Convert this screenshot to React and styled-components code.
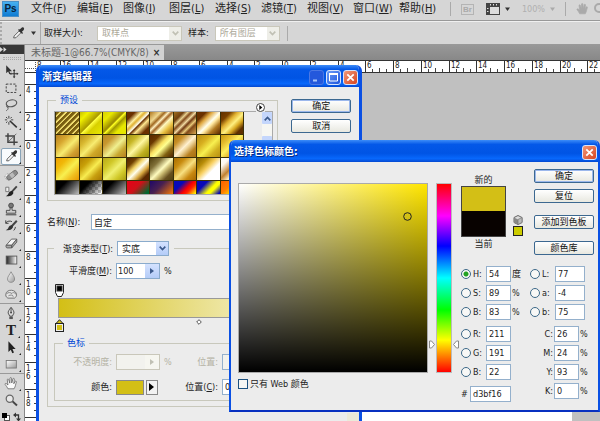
import React, { useState } from "react";
import styled, { createGlobalStyle, css } from "styled-components";

const MENUS = [
    ["文件", "F"], ["编辑", "E"], ["图像", "I"], ["图层", "L"], ["选择", "S"],
    ["滤镜", "T"], ["视图", "V"], ["窗口", "W"], ["帮助", "H"],
];

const diag = (...stops) => `linear-gradient(135deg, ${stops.join(", ")})`;

const PRESETS = [
    "repeating-linear-gradient(135deg, #7a5e10 0 2px, #f0dc70 3px 4px)",
    diag("#c8c000", "#f0f000 20%", "#a89800 49%", "#ffff40 52%", "#d8d000 66%", "#e8e800"),
    diag("#d8d000", "#e8e800 22%", "#988800 46%", "#ffff20 51%", "#a09800 60%", "#e8e800 75%"),
    diag("#6a3000", "#6a3000 18%", "#fff0a0 34%", "#e0b030 42%", "#fffff0 52%", "#6a3000 56%", "#ffe890 66%", "#6a3000 84%"),
    diag("#b07820", "#f0d890 24%", "#a06820 34%", "#fff0c0 42%", "#a06020 50%", "#fff8c0 60%", "#e8c040 76%", "#905008"),
    diag("#a07020", "#704010 22%", "#e8d090 32%", "#804818 40%", "#f0d8a0 50%", "#703810 58%", "#e8c878 68%", "#804818 76%", "#d8a850"),
    diag("#6a3000", "#6a3000 20%", "#e0a840 34%", "#fffff0 52%", "#ffe8a0 60%", "#b07820 76%", "#5a2800"),
    diag("#603000", "#784000 22%", "#e0b030 38%", "#fff080 54%", "#d8a820 68%", "#603000 84%"),
    diag("#b88020", "#d8a830 28%", "#f8ec70 54%", "#d0a030 78%", "#b88020"),
    diag("#b89018", "#d8b830 26%", "#f8ec70 50%", "#d0a828 72%", "#b88c18"),
    diag("#b88820", "#c89830 26%", "#f0f090 54%", "#c8a830 76%", "#b88020"),
    diag("#a09010", "#c8b828 26%", "#fff8a0 50%", "#c0b020 76%", "#989008"),
    diag("#5a2800", "#6a3800 22%", "#f8e060 44%", "#ffff90 56%", "#806010 78%", "#502400"),
    diag("#a87010", "#c89028 24%", "#fff0d0 50%", "#f0d8a0 58%", "#b88020 78%", "#a87010"),
    diag("#b88c10", "#d8b020 30%", "#f8f050 54%", "#d0b020 76%", "#b89010"),
    diag("#c89810", "#e8c030 26%", "#fff060 46%", "#d8a020 72%", "#b88010"),
    diag("#f0a000", "#f0b808 26%", "#f8f050 54%", "#f0c020 76%", "#e89800"),
    diag("#b08000", "#c8a008 26%", "#f8ec50 52%", "#c8a010 74%", "#a87800"),
    diag("#b8a818", "#d0c828 28%", "#f0f070 52%", "#d0c828 76%", "#a89c10"),
    diag("#502400", "#704000 22%", "#f0d060 38%", "#fffff0 52%", "#d8a840 68%", "#5a2800 84%"),
    diag("#504010", "#807038 26%", "#fffcc0 50%", "#c8b870 62%", "#685020 80%", "#504010"),
    diag("#a86c00", "#c88c10 26%", "#f8e080 52%", "#c88810 76%", "#a86800"),
    diag("#806000", "#b88c08 24%", "#f8d060 44%", "#ffffff 62%", "#ffffff"),
    diag("#ffffff", "#fff8f0 20%", "#c08030 46%", "#fff0c8 64%", "#b87018"),
    diag("#000000", "#000000 24%", "#ffffff"),
    `${diag("#000000", "#000000 24%", "rgba(0,0,0,0) 76%")}, repeating-conic-gradient(#c4c4c4 0 25%, #ffffff 0 50%) 0 0 / 6px 6px`,
    diag("#000000", "#000000 24%", "#ffffff"),
    diag("#e80018", "#d01018 36%", "#006830 72%"),
    diag("#200868", "#482050 34%", "#ff7c00 82%"),
    diag("#0808b8", "#0808b8 24%", "#f80000 46%", "#ff2000 56%", "#ffff00 78%"),
    diag("#0808b8", "#0808b8 24%", "#ffff00 48%", "#ffff00 56%", "#0808b8 76%"),
    diag("#ff6000", "#ff8000 30%", "#ffff00 60%", "#ff6000"),
];

const dark = { fill: "none", stroke: "#333", strokeWidth: 1 };

const EyedropperShape = () => (
    <>
        <path d="M3 13.5l.6-2.2 5.6-5.6 2 2-5.6 5.6z" fill="#f4f4f4" stroke="#444" strokeWidth=".9" />
        <path d="M8 4.4l4.6 4.6 1-1-1.2-1.4 1.8-1.8c.9-.9.8-2 .2-2.7-.8-.8-1.9-.7-2.7.1L9.900 4 9 3.400z" fill="#333" />
    </>
);

const HandShape = ({ fill, stroke }) => (
    <path
        d="M4.500 14.500C3.600 12.600 2.300 10.800 1.300 9.600c-.5-.9.7-1.600 1.500-.9l1.700 1.500L3.700 4.400c-.1-1.100 1.300-1.300 1.600-.3l1.300 4L6.800 2.600c.1-1.100 1.600-1.100 1.700 0l.3 5.300 1.300-4.600c.3-1 1.700-.7 1.600.3l-.6 5.200 1.500-2.600c.6-.9 1.700-.3 1.400.6-.8 2.300-1 5.200-2.600 7.700z"
        fill={fill}
        stroke={stroke}
        strokeWidth=".8"
    />
);

const TOOLS = [
    { name: "移动工具", art: <><path d="M2.500 1.500v9l2.200-2 1.400 3.200 1.400-.6-1.400-3h3z" fill="#333" /><path d="M11.500 7v8M7.500 11h8" stroke="#333" strokeWidth="1.200" /><path d="M11.500 5.800l1.500 2h-3zM11.500 16.200l1.500-2h-3zM6.300 11l2-1.500v3zM16.500 11l-2-1.500v3z" fill="#333" /></> },
    { name: "矩形选框工具", more: true, art: <rect x="2.500" y="3.500" width="11" height="9.500" {...dark} strokeDasharray="2.500 1.500" /> },
    { name: "套索工具", more: true, art: <><ellipse cx="8.500" cy="6" rx="6" ry="3.800" transform="rotate(-12 8.500 6)" {...dark} stroke="#555" strokeWidth="1.300" /><path d="M4 8.500c-1.800 1-.8 2.600.6 2.200 1.200-.5.200-2-.9-1.200M4.600 10.800C5 12.500 4 13.500 2.500 14.500" {...dark} stroke="#555" /></> },
    { name: "魔棒工具", more: true, art: <><path d="M6.500 6.500l8 7.500" stroke="#333" strokeWidth="1.800" /><path d="M5.500 1v3M5.500 8v3M1 5.500h2.500M8 5.500h2.500M2.300 2.300l1.600 1.600M8.800 2.300L7.200 3.900M2.300 8.900l1.600-1.600" {...dark} /></> },
    { name: "裁剪工具", more: true, art: <><path d="M4.500 1.500v10h11M1.500 4.500h10v10.500" fill="none" stroke="#444" strokeWidth="1.700" /><path d="M5 11L14 2" stroke="#555" strokeWidth=".9" /></> },
    { name: "吸管工具", more: true, active: true, art: <EyedropperShape /> },
    null,
    { name: "修复画笔工具", more: true, art: <><circle cx="4.500" cy="10" r="3.300" fill="#f4f4f4" stroke="#888" strokeDasharray="1 1" /><g transform="rotate(-38 9 8)"><rect x="2" y="5.500" width="14" height="5.500" rx="2.700" fill="#8c8c8c" stroke="#555" strokeWidth=".8" /><rect x="6.800" y="5.800" width="4.400" height="4.900" fill="#bbb" /></g></> },
    { name: "画笔工具", more: true, art: <><path d="M2 2.500h3.500v5H2z" fill="#eee" stroke="#555" strokeWidth=".8" /><path d="M14.500 1.500L8.500 8" stroke="#444" strokeWidth="2.200" /><path d="M9.700 7c1.500 1.500 1 3-.6 4.200-1.900 1.400-4.300 1.700-7.100 1.500 2.100-.9 2.700-2.100 3.300-3.500.9-1.900 2.900-3 4.400-2.200z" fill="#222" /></> },
    { name: "仿制图章工具", more: true, art: <><circle cx="8" cy="4" r="2.700" fill="#777" stroke="#444" /><path d="M7 6.500h2l.3 3h4v3.200H2.700V9.500h4z" fill="#ccc" stroke="#444" /><path d="M2 14.500h12" stroke="#444" strokeWidth="1.200" /></> },
    { name: "历史记录画笔工具", more: true, art: <><path d="M2 4.500c2-2.500 5-2.500 7-1.500M2 1.500v3.400h3.200" {...dark} /><path d="M14.500 2L8.500 8.500" stroke="#444" strokeWidth="2.200" /><path d="M9.500 7.500c1.200 1.300.8 2.800-.8 3.800-1.800 1.300-3.900 1.600-6.700 1.500 2-.9 2.600-2 3.200-3.400.8-1.700 2.800-2.700 4.300-1.900z" fill="#333" /><path d="M11 13c1-1 1.700-2.200 2-4" {...dark} /></> },
    { name: "橡皮擦工具", more: true, art: <><path d="M2.500 10.500L8.500 3.500h6l-5.700 7z" fill="#f4f4f4" stroke="#555" /><path d="M2.500 10.500h6.300v3H3.500c-1.200 0-1.600-1.800-1-3zM8.800 13.500l5.700-6.600V3.500l-5.700 7z" fill="#aaa" stroke="#555" /></> },
    { name: "渐变工具", more: true, art: <rect x="2.500" y="3.500" width="12" height="9" fill="url(#toolFade)" stroke="#555" /> },
    { name: "模糊工具", more: true, art: <path d="M8 2c1.500 3 4 5.300 4 8.200 0 2.300-1.800 3.800-4 3.800s-4-1.500-4-3.800C4 7.300 6.600 5 8 2z" fill="url(#toolBall)" stroke="#777" strokeWidth=".8" /> },
    { name: "减淡工具", more: true, art: <><path d="M2 9c0-3.800 3-5.500 6.500-5.300 3.300.2 5.700 2.300 5.700 5.200 0 1.500-1 3-2.200 3.700H4.500C3 12 2 10.800 2 9z" fill="#e4e4e4" stroke="#666" /><path d="M3 7.500c2-1.700 4.500-1.500 6.300.2M5 10c2-1.500 5.500-1 5.500 1M9.500 6.500c2-.5 3.500.5 4.200 2" {...dark} stroke="#777" /></> },
    null,
    { name: "钢笔工具", more: true, art: <><path d="M8 1.500c2.500 3 3.500 5 3.300 6.500L9.500 11.500h-3L4.700 8C4.500 6.500 5.500 4.500 8 1.500z" fill="#ddd" stroke="#444" /><path d="M8 2v5" stroke="#444" /><circle cx="8" cy="7.500" r="1" fill="#333" /><path d="M6 12h4v2.800H6z" fill="#555" /></> },
    { name: "横排文字工具", more: true, letter: "T" },
    { name: "路径选择工具", more: true, art: <path d="M5 1.500v12l2.700-2.500 1.700 4 1.900-.8-1.700-3.900h3.600z" fill="#222" /> },
    { name: "矩形工具", more: true, art: <rect x="2.500" y="4" width="11.500" height="8.500" fill="url(#toolBall)" stroke="#777" /> },
    null,
    { name: "抓手工具", more: true, art: <HandShape fill="#fafafa" stroke="#555" /> },
    { name: "缩放工具", art: <><circle cx="6.500" cy="6.500" r="4" fill="#e8e8e8" stroke="#666" strokeWidth="1.400" /><path d="M9.700 9.500l5 4.700" stroke="#444" strokeWidth="2.200" /></> },
];

const STEP = 27.75;

const TopRuler = () => {
    const marks = [];
    for (let i = 0; i < 20; i++) {
        const x = Math.round(35 + i * STEP);
        marks.push(
            <g key={i}>
                <path d={`M${x + 0.5} 0v12`} stroke="#333" />
                {[1, 2, 3].map((n) => (
                    <path key={n} d={`M${x + n * 7 + 0.5} ${n === 2 ? 8 : 9}v4`} stroke="#444" />
                ))}
                <text x={x + 2} y="8">{Math.abs(i * 2 - 16)}</text>
            </g>
        );
    }
    return (
        <RulerTop aria-hidden="true">
            {marks}
            <text x="12" y="8">8</text>
            <path d="M10.500 0v12M0 8.500h11" stroke="#555" strokeDasharray="1 1" />
            <path d="M0 .5h2400M0 12.500h2400" stroke="#333" />
        </RulerTop>
    );
};

const SideRuler = () => {
    const marks = [];
    for (let i = 0; i < 13; i++) {
        const y = Math.round(11 + i * STEP);
        const digits = i < 12 ? String(Math.abs(i * 2 - 4)).split("") : [];
        marks.push(
            <g key={i}>
                <path d={`M0 ${y + 0.5}h12`} stroke="#333" />
                {[1, 2, 3].map((n) => (
                    <path key={n} d={`M9 ${y + n * 7 + 0.5}h4`} stroke="#444" />
                ))}
                {digits.map((d, n) => (
                    <text key={n} x="1" y={y + 9 + n * 8}>{d}</text>
                ))}
            </g>
        );
    }
    return <RulerSide aria-hidden="true">{marks}</RulerSide>;
};

const Chevron = ({ color = "#3c5a8c" }) => (
    <svg width="7" height="5" viewBox="0 0 7 5">
        <path d="M.7.700l2.800 2.800L6.300.700" fill="none" stroke={color} strokeWidth="1.700" />
    </svg>
);

const Triangle = ({ color = "#333" }) => (
    <svg width="5" height="4" viewBox="0 0 5 4">
        <path d="M0 .5h5L2.500 4z" fill={color} />
    </svg>
);

const CloseButton = () => (
    <CaptionButton $close aria-label="关闭">
        <svg width="13" height="13" viewBox="0 0 13 13">
            <path d="M3.300 3.300l6.400 6.400M9.700 3.300L3.300 9.700" stroke="#fff" strokeWidth="1.800" />
        </svg>
    </CaptionButton>
);

const GradientEditor = () => (
    <EditorWindow aria-label="渐变编辑器">
        <TitleBar>
            <h2>渐变编辑器</h2>
            <CaptionButton $dim aria-label="最小化">
                <svg width="13" height="13" viewBox="0 0 13 13"><path d="M3 9.500h4" stroke="#a8c4f8" strokeWidth="2" /></svg>
            </CaptionButton>
            <CaptionButton aria-label="最大化">
                <svg width="13" height="13" viewBox="0 0 13 13">
                    <path d="M2.500 3v7h8V3z" fill="none" stroke="#fff" /><path d="M2 3h9" stroke="#fff" strokeWidth="2" />
                </svg>
            </CaptionButton>
            <CloseButton />
        </TitleBar>
        <EditorBody>
            <PresetRow>
                <Group>
                    <GroupTitle>预设</GroupTitle>
                    <PresetFrame>
                        <PresetGrid>
                            {PRESETS.map((background, index) => (
                                <Preset key={index} $fill={background} aria-label={`预设 ${index + 1}`} />
                            ))}
                        </PresetGrid>
                        <ScrollTrack>
                            <ScrollPiece aria-label="向上"><svg width="7" height="5" viewBox="0 0 7 5"><path d="M.7 4.300l2.800-2.800 2.800 2.800" fill="none" stroke="#3c5a8c" strokeWidth="1.700" /></svg></ScrollPiece>
                            <ScrollPiece $thumb aria-label="滚动" />
                        </ScrollTrack>
                    </PresetFrame>
                    <PresetMenu aria-label="预设菜单">
                        <svg width="9" height="9" viewBox="0 0 9 9">
                            <circle cx="4.500" cy="4.500" r="4" fill="#fff" stroke="#444" /><path d="M3.300 2l3 2.500-3 2.500z" fill="#000" />
                        </svg>
                    </PresetMenu>
                </Group>
                <ButtonColumn $gap={6}>
                    <PushButton $primary>确定</PushButton>
                    <PushButton>取消</PushButton>
                </ButtonColumn>
            </PresetRow>
            <NameRow>
                <label htmlFor="gradientName">名称(<u>N</u>):</label>
                <TextInput id="gradientName" defaultValue="自定" />
            </NameRow>
            <Group>
                <TypeTitle>
                    <label htmlFor="gradientType">渐变类型(<u>T</u>):</label>
                    <SelectBox $width={52}>
                        <select id="gradientType"><option>实底</option></select>
                        <SelectArrow><Chevron /></SelectArrow>
                    </SelectBox>
                </TypeTitle>
                <SmoothRow>
                    <label htmlFor="smoothness">平滑度(<u>M</u>):</label>
                    <Spinner>
                        <input id="smoothness" defaultValue="100" />
                        <button aria-label="调整平滑度"><svg width="4" height="6" viewBox="0 0 4 6"><path d="M0 0l4 3-4 3z" fill="#3c5a8c" /></svg></button>
                    </Spinner>
                    <span>%</span>
                </SmoothRow>
                <StopLine>
                    <svg width="9" height="14" viewBox="0 0 9 14">
                        <path d="M.5.500h8v8l-2 4h-4l-2-4z" fill="#fff" stroke="#222" /><rect x="2" y="2" width="5" height="5" fill="#000" stroke="#333" />
                    </svg>
                </StopLine>
                <GradientBar />
                <StopLine>
                    <svg width="9" height="13" viewBox="0 0 9 13">
                        <path d="M4.500.700L8 4.500H1z" fill="#d3bf16" stroke="#222" /><rect x=".5" y="4.500" width="8" height="8" fill="#eee" stroke="#222" /><rect x="2" y="6" width="5" height="5" fill="#d3bf16" />
                    </svg>
                    <svg width="6" height="6" viewBox="0 0 6 6"><path d="M3 .700L5.300 3 3 5.300.700 3z" fill="#fff" stroke="#444" strokeWidth=".9" /></svg>
                </StopLine>
                <StopGroup>
                    <GroupTitle>色标</GroupTitle>
                    <StopRow $off>
                        <label htmlFor="opacity">不透明度:</label>
                        <Spinner $off>
                            <input id="opacity" disabled />
                            <button disabled aria-label="调整不透明度"><svg width="4" height="6" viewBox="0 0 4 6"><path d="M0 0l4 3-4 3z" fill="#c0c0b4" /></svg></button>
                        </Spinner>
                        <span>%</span>
                        <label htmlFor="opacityAt">位置:</label>
                        <TextInput id="opacityAt" disabled />
                    </StopRow>
                    <StopRow>
                        <label htmlFor="stopColor">颜色:</label>
                        <ColorPair>
                            <button id="stopColor" aria-label="色标颜色" />
                            <button aria-label="颜色选项"><svg width="6" height="8" viewBox="0 0 6 8"><path d="M0 0l5 4-5 4z" fill="#000" /></svg></button>
                        </ColorPair>
                        <span />
                        <label htmlFor="colorAt">位置(<u>C</u>):</label>
                        <TextInput id="colorAt" defaultValue="0" />
                    </StopRow>
                </StopGroup>
            </Group>
            <SizeGrip />
        </EditorBody>
    </EditorWindow>
);

const LEFT_VALUES = [
    [["H", "54", "度"], ["S", "89", "%"], ["B", "83", "%"]],
    [["R", "211"], ["G", "191"], ["B", "22"]],
];
const LAB_VALUES = [["L", "77"], ["a", "-4"], ["b", "75"]];
const CMYK_VALUES = [["C", "26"], ["M", "24"], ["Y", "93"], ["K", "0"]];

const ValueLine = ({ id, name, value, unit, radio, wide, checked }) => (
    <ValueRow $wide={wide} $radio={radio}>
        {radio && <Radio name="channel" aria-label={name} defaultChecked={checked} />}
        <label htmlFor={id}>{name}:</label>
        <TextInput id={id} defaultValue={value} />
        {unit && <span>{unit}</span>}
    </ValueRow>
);

const ColorPicker = () => {
    const [hue, setHue] = useState(54);
    const markTop = { top: `${Math.round((1 - hue / 360) * 100)}%` };

    return (
        <PickerWindow aria-label="选择色标颜色">
            <TitleBar>
                <h2>选择色标颜色:</h2>
                <CloseButton />
            </TitleBar>
            <PickerBody>
                <FieldColumn>
                    <ColorField $hue={hue}>
                        <svg width="9" height="9" viewBox="0 0 9 9"><circle cx="4.500" cy="4.500" r="3.800" fill="none" stroke="#222" /></svg>
                    </ColorField>
                    <WebOnly>
                        <input type="checkbox" />
                        只有 Web 颜色
                    </WebOnly>
                </FieldColumn>
                <HueSlider>
                    <HueBar />
                    <HueMark style={markTop}>
                        <svg width="6" height="9" viewBox="0 0 6 9"><path d="M.5 1h2l3 3.500-3 3.500h-2z" fill="#fff" stroke="#888" /></svg>
                        <svg width="6" height="9" viewBox="0 0 6 9"><path d="M5.500 1h-2l-3 3.500 3 3.500h2z" fill="#fff" stroke="#888" /></svg>
                    </HueMark>
                    <input type="range" min="0" max="360" value={hue} aria-label="色相" onChange={(e) => setHue(Number(e.target.value))} />
                </HueSlider>
                <SideColumn>
                    <PickerTop>
                        <Compare>
                            <span>新的</span>
                            <ComparePatch />
                            <span>当前</span>
                        </Compare>
                        <WebWarning>
                            <svg width="10" height="10" viewBox="0 0 10 10">
                                <path d="M5 .5l4 2v5l-4 2-4-2v-5z" fill="#ddd" stroke="#666" /><path d="M1 2.500l4 2v5l-4-2z" fill="#888" /><path d="M5 4.500l4-2v5l-4 2z" fill="#bbb" stroke="#777" strokeWidth=".7" />
                            </svg>
                            <button aria-label="Web 安全颜色" />
                        </WebWarning>
                        <ButtonColumn $gap={12}>
                            <ButtonColumn $gap={6}>
                                <PushButton $primary>确定</PushButton>
                                <PushButton>复位</PushButton>
                            </ButtonColumn>
                            <PushButton>添加到色板</PushButton>
                            <PushButton>颜色库</PushButton>
                        </ButtonColumn>
                    </PickerTop>
                    <Values>
                        <ValueColumn>
                            {LEFT_VALUES.map((group, index) => (
                                <ValueGroup key={index}>
                                    {group.map(([name, value, unit]) => (
                                        <ValueLine key={name} id={`left${index}${name}`} name={name} value={value} unit={unit} radio checked={name === "H"} />
                                    ))}
                                </ValueGroup>
                            ))}
                            <HexRow>
                                <label htmlFor="hex">#</label>
                                <TextInput id="hex" defaultValue="d3bf16" />
                            </HexRow>
                        </ValueColumn>
                        <ValueColumn>
                            <ValueGroup>
                                {LAB_VALUES.map(([name, value]) => (
                                    <ValueLine key={name} id={`lab${name}`} name={name} value={value} radio wide />
                                ))}
                            </ValueGroup>
                            <ValueGroup>
                                {CMYK_VALUES.map(([name, value]) => (
                                    <ValueLine key={name} id={`cmyk${name}`} name={name} value={value} unit="%" />
                                ))}
                            </ValueGroup>
                        </ValueColumn>
                    </Values>
                </SideColumn>
            </PickerBody>
        </PickerWindow>
    );
};

const App = () => (
    <>
        <GlobalStyle />
        <Screen>
            <MenuBar>
                <Logo>Ps</Logo>
                <MenuList>
                    {MENUS.map(([text, key]) => (
                        <button key={key}>{text}(<u>{key}</u>)</button>
                    ))}
                </MenuList>
                <BarTools>
                    <Bridge>Br</Bridge>
                    <button aria-label="查看额外内容">
                        <svg width="14" height="12" viewBox="0 0 14 12">
                            <rect x="0" y="0" width="14" height="12" fill="#444" /><rect x="4" y="4" width="9" height="7" fill="#ddd" />
                            <path d="M4.500 1v1.500M7.500 1v1.500M10.500 1v1.500M1 5.500h1.500M1 8.500h1.500" stroke="#ddd" />
                        </svg>
                        <Triangle />
                    </button>
                    <Zoom>100% <Triangle color="#aaa" /></Zoom>
                </BarTools>
                <BarHands>
                    <svg width="13" height="13" viewBox="0 0 16 16"><HandShape fill="#aaa" stroke="#aaa" /></svg>
                    <svg width="14" height="14" viewBox="0 0 14 14"><circle cx="6" cy="6" r="4" fill="none" stroke="#aaa" strokeWidth="2" /></svg>
                </BarHands>
            </MenuBar>
            <OptionBar>
                <ToolPreset aria-label="吸管工具">
                    <svg width="15" height="15" viewBox="0 0 17 17"><EyedropperShape /></svg>
                    <Triangle />
                </ToolPreset>
                <OptionFields>
                    <label htmlFor="sampleSize">取样大小:</label>
                    <SelectBox $off $width={85}>
                        <select id="sampleSize" disabled><option>取样点</option></select>
                        <SelectArrow $off><Chevron color="#c0c0b4" /></SelectArrow>
                    </SelectBox>
                    <label htmlFor="sampleFrom">样本:</label>
                    <SelectBox $off $width={65}>
                        <select id="sampleFrom" disabled><option>所有图层</option></select>
                        <SelectArrow $off><Chevron color="#c0c0b4" /></SelectArrow>
                    </SelectBox>
                </OptionFields>
            </OptionBar>
            <Workspace>
                <ToolBox>
                    <ToolHead><svg width="7" height="5" viewBox="0 0 7 5"><path d="M0 0l3 2.500L0 5zM3.500 0l3 2.500-3 2.500z" fill="#ddd" /></svg></ToolHead>
                    <ToolGrip />
                    <svg width="0" height="0">
                        <defs>
                            <linearGradient id="toolFade"><stop offset="0" stopColor="#222" /><stop offset="1" stopColor="#fff" /></linearGradient>
                            <linearGradient id="toolBall" x2="1" y2="1"><stop offset="0" stopColor="#fff" /><stop offset="1" stopColor="#999" /></linearGradient>
                        </defs>
                    </svg>
                    {TOOLS.map((tool, index) => tool ? (
                        <Tool key={tool.name} $active={tool.active} aria-label={tool.name}>
                            {tool.letter ? <b>{tool.letter}</b> : <svg width="15" height="15" viewBox="0 0 17 17">{tool.art}</svg>}
                            <Corner $show={tool.more} />
                        </Tool>
                    ) : <ToolRule key={index} />)}
                    <ToolColors>
                        <svg width="22" height="10" viewBox="0 0 22 10">
                            <rect x="3.500" y="3.500" width="5" height="5" fill="#fff" stroke="#555" /><rect x="1" y="1" width="5" height="5" fill="#000" />
                            <path d="M14 3h3.500v4" fill="none" stroke="#333" strokeWidth="1.300" /><path d="M12 3l3-2.500v5zM17.500 9.500L15 6.500h5z" fill="#333" />
                        </svg>
                    </ToolColors>
                </ToolBox>
                <DocumentArea>
                    <TabStrip>
                        <DocumentTab>未标题-1@66.7%(CMYK/8)<button aria-label="关闭文档">×</button></DocumentTab>
                    </TabStrip>
                    <TopRuler />
                    <CanvasRow>
                        <SideRuler />
                        <Canvas><Paper /></Canvas>
                    </CanvasRow>
                </DocumentArea>
            </Workspace>
            <GradientEditor />
            <ColorPicker />
        </Screen>
    </>
);

const GlobalStyle = createGlobalStyle`
    * {
        box-sizing: border-box;
    }
    body {
        margin: 0;
        color: #222;
        font: 9px/12px "DejaVu Sans Condensed", "Noto Sans CJK SC", sans-serif;
    }
    button, input, select {
        margin: 0;
        padding: 0;
        border: 0;
        border-radius: 0;
        background: none;
        color: inherit;
        font: inherit;
    }
    svg {
        flex: none;
        display: block;
    }
`;

const Screen = styled.div`
    position: relative;
    display: flex;
    flex-direction: column;
    height: 100vh;
    overflow: hidden;
    background: #d6d6d6;
`;

const MenuBar = styled.header`
    display: flex;
    align-items: center;
    flex: none;
    height: 21px;
    padding-bottom: 2px;
    border-bottom: 1px solid #999;
    white-space: nowrap;
    & > * {
        flex: none;
    }
`;

const Logo = styled.div`
    width: 17px;
    height: 16px;
    margin-left: 2px;
    background: linear-gradient(#4ab4f4, #0c78d0);
    box-shadow: 0 0 0 1px #4a90c8 inset;
    color: #08233c;
    font: bold 10px/16px "Liberation Sans", sans-serif;
    text-align: center;
`;

const MenuList = styled.nav`
    display: grid;
    grid-template-columns: repeat(9, 46px);
    margin-left: 12px;
    & > button {
        font-size: 11px;
        line-height: 16px;
        text-align: left;
    }
`;

const BarTools = styled.div`
    display: flex;
    align-items: center;
    gap: 12px;
    height: 14px;
    margin-left: 5px;
    padding: 0 10px;
    border: solid #aaa;
    border-width: 0 1px;
    & > button {
        display: flex;
        align-items: center;
        gap: 5px;
    }
`;

const Bridge = styled.button`
    && {
        height: 11px;
        padding: 0 1px;
        border: 1px solid #b4b4b4;
        color: #aaa;
        font: bold 8px/9px "Liberation Sans", sans-serif;
    }
`;

const Zoom = styled.button`
    color: #b0b0b0;
`;

const BarHands = styled.div`
    display: flex;
    gap: 4px;
    padding-left: 10px;
`;

const OptionBar = styled.section`
    display: flex;
    align-items: center;
    flex: none;
    height: 24px;
    border-top: 1px solid #f0f0f0;
    border-bottom: 1px solid #999;
`;

const ToolPreset = styled.button`
    display: flex;
    align-items: center;
    align-self: stretch;
    gap: 5px;
    width: 41px;
    padding-left: 9px;
    border-left: 2px dotted #aaa;
    border-right: 1px solid #aaa;
`;

const OptionFields = styled.div`
    display: flex;
    align-items: center;
    gap: 6px;
    padding: 0 7px 0 3px;
    border-right: 1px solid #aaa;
    white-space: nowrap;
    & > label:first-child {
        width: 47px;
    }
`;

const SelectBox = styled.span`
    display: flex;
    width: ${(props) => props.$width}px;
    height: 15px;
    border: 1px solid ${(props) => (props.$off ? "#c9c7ba" : "#8aabcc")};
    background: #fff;
    color: ${(props) => (props.$off ? "#aca899" : "#222")};
    & > select {
        flex: 1;
        min-width: 0;
        padding-left: 4px;
        appearance: none;
        opacity: 1;
    }
`;

const SelectArrow = styled.span`
    display: flex;
    align-items: center;
    justify-content: center;
    width: 12px;
    background: ${(props) => (props.$off ? "#eeeee8" : "linear-gradient(#d4e2ff, #b4ccf8)")};
`;

const Workspace = styled.main`
    display: flex;
    flex: 1;
    min-height: 0;
`;

const ToolBox = styled.aside`
    display: flex;
    flex-direction: column;
    flex: none;
    width: 25px;
    border-right: 1px solid #888;
    & > * {
        flex: none;
    }
`;

const ToolHead = styled.div`
    height: 9px;
    padding: 2px 0;
    background: #383838;
`;

const ToolGrip = styled.div`
    height: 3px;
    margin: 3px 3px;
    border: dotted #aaa;
    border-width: 1px 0;
`;

const Tool = styled.button`
    display: flex;
    align-items: center;
    justify-content: center;
    height: 17px;
    margin: 0 3px 0 1px;
    padding-left: 2px;
    border: 1px solid transparent;
    ${(props) => props.$active && css`
        border-color: #8aa4b8;
        border-radius: 2px;
        background: #f8fbfd;
    `}
    & > b {
        width: 15px;
        font: bold 15px/15px "Liberation Serif", serif;
    }
`;

const Corner = styled.i`
    align-self: flex-end;
    border: 1px solid ${(props) => (props.$show ? "#222" : "transparent")};
    border-top-color: transparent;
    border-left-color: transparent;
`;

const ToolRule = styled.div`
    height: 1px;
    margin-bottom: 1px;
    background: #999;
`;

const ToolColors = styled.div`
    padding: 3px 0 0 1px;
`;

const DocumentArea = styled.section`
    display: flex;
    flex-direction: column;
    flex: 1;
    min-width: 0;
`;

const TabStrip = styled.div`
    display: flex;
    flex: none;
    height: 15px;
    background: linear-gradient(#989898, #888);
`;

const DocumentTab = styled.div`
    display: flex;
    align-items: center;
    gap: 4px;
    padding: 0 4px 0 6px;
    background: #d2d2d2;
    color: #666;
    font-size: 10px;
    white-space: nowrap;
    & > button {
        color: #333;
        font-weight: bold;
    }
`;

const RulerTop = styled.svg`
    width: 100%;
    height: 13px;
    background: #fff;
    fill: #222;
    font-size: 8px;
`;

const CanvasRow = styled.div`
    display: flex;
    flex: 1;
    min-height: 0;
`;

const RulerSide = styled.svg`
    width: 13px;
    height: 100%;
    background: #fff;
    border-right: 1px solid #333;
    fill: #222;
    font-size: 8px;
`;

const Canvas = styled.div`
    flex: 1;
    padding: 67px 28px 0 244px;
    background: #c0c0c0;
`;

const Paper = styled.div`
    height: 100%;
    background: #fff;
`;

const Window = styled.section`
    position: absolute;
    border: 3px solid #0a50e4;
    border-top: 0;
    border-radius: 6px 6px 0 0;
    background: #ececec;
    overflow: hidden;
    white-space: nowrap;
`;

const EditorWindow = styled(Window)`
    top: 65px;
    left: 36px;
    bottom: 0;
    width: 326px;
    border-bottom: 0;
`;

const PickerWindow = styled(Window)`
    top: 140px;
    left: 229px;
    right: 0;
    border-width: 0 2px 2px;
    border-bottom-color: #0830c0;
`;

const TitleBar = styled.div`
    display: flex;
    align-items: center;
    gap: 2px;
    height: 22px;
    margin: 0 -2px;
    padding: 2px 3px 0 5px;
    background: linear-gradient(#3c8cf8, #0458e8 20%, #0054e4 60%, #0868fc 85%, #0448d0);
    & > h2 {
        flex: 1;
        margin: 0;
        color: #fff;
        font-size: 10px;
        font-weight: bold;
        text-shadow: 1px 1px 0 #0a2a80;
    }
`;

const CaptionButton = styled.button`
    display: flex;
    align-items: center;
    justify-content: center;
    width: 15px;
    height: 15px;
    border: 1px solid ${(props) => (props.$dim ? "#4c78e4" : "#d8e4fc")};
    border-radius: 3px;
    background: ${(props) => (props.$close ? "linear-gradient(135deg, #f09878, #d84420)" : props.$dim ? "#2458dc" : "linear-gradient(135deg, #6c9cf8, #1c54dc)")};
`;

const EditorBody = styled.div`
    padding: 7px 8px 0;
`;

const PresetRow = styled.div`
    display: flex;
    gap: 13px;
    & > div {
        margin-top: 5px;
    }
`;

const Group = styled.fieldset`
    position: relative;
    min-width: 0;
    margin: 0;
    padding: 5px 6px 5px;
    border: 1px solid #c8c8bc;
`;

const GroupTitle = styled.legend`
    margin-left: 2px;
    padding: 0 4px;
    color: #0046d5;
    line-height: 12px;
`;

const PresetFrame = styled.div`
    display: flex;
    justify-content: space-between;
    width: 219px;
    height: 84px;
    border: 1px solid #aaa;
    overflow: hidden;
`;

const PresetGrid = styled.div`
    display: grid;
    grid-template-columns: repeat(8, 1fr);
    grid-auto-rows: 22px;
    gap: 1px;
    width: 189px;
    padding: 0 1px;
    background: #3a3008;
`;

const Preset = styled.button`
    background: ${(props) => props.$fill};
`;

const ScrollTrack = styled.div`
    width: 10px;
    background: #f6f6f2;
`;

const ScrollPiece = styled.button`
    display: flex;
    align-items: center;
    justify-content: center;
    width: 100%;
    height: ${(props) => (props.$thumb ? 24 : 12)}px;
    margin-top: ${(props) => (props.$thumb ? 12 : 0)}px;
    border-radius: 1px;
    background: #c4d6fc;
`;

const PresetMenu = styled.button`
    position: absolute;
    top: -3px;
    right: 12px;
    background: #ececec;
`;

const ButtonColumn = styled.div`
    display: flex;
    flex-direction: column;
    gap: ${(props) => props.$gap}px;
    width: 60px;
`;

const PushButton = styled.button`
    height: 14px;
    border: 1px solid #3c6890;
    border-radius: 2px;
    background: linear-gradient(#fff, #e8e8e0);
    color: #111;
    line-height: 12px;
    ${(props) => props.$primary && css`
        box-shadow: 0 0 0 1px #9cb8ec inset;
    `}
`;

const TextInput = styled.input`
    min-width: 0;
    width: 100%;
    height: 16px;
    padding-left: 2px;
    border: 1px solid #94b0cc;
    background: #fff;
    &:disabled {
        background: #f2f2ee;
    }
`;

const NameRow = styled.div`
    display: grid;
    grid-template-columns: 44px 1fr;
    align-items: center;
    margin: 13px 0 11px;
`;

const TypeTitle = styled.legend`
    display: flex;
    align-items: center;
    gap: 4px;
    padding: 0 5px 0 9px;
`;

const SmoothRow = styled.div`
    display: grid;
    grid-template-columns: 58px 44px 1fr;
    align-items: center;
    gap: 4px;
    margin-top: 2px;
    & > label {
        text-align: right;
    }
`;

const Spinner = styled.span`
    display: flex;
    height: 16px;
    border: 1px solid ${(props) => (props.$off ? "#c9c7ba" : "#8aabcc")};
    background: ${(props) => (props.$off ? "#f2f2ee" : "#fff")};
    & > input {
        flex: 1;
        min-width: 0;
        padding-left: 1px;
    }
    & > button {
        display: flex;
        align-items: center;
        justify-content: center;
        width: 14px;
        background: ${(props) => (props.$off ? "#f6f6f0" : "linear-gradient(#d4e2ff, #b4ccf8)")};
    }
`;

const StopLine = styled.div`
    display: flex;
    gap: 132px;
    height: 14px;
    margin: 5px 0 0 1px;
    & + div + & {
        margin-top: 1px;
    }
`;

const GradientBar = styled.div`
    height: 20px;
    margin: 0 8px 0 4px;
    border: 1px solid #999;
    background: linear-gradient(to right, #d3bf16, #fff);
`;

const StopGroup = styled(Group)`
    margin-top: 4px;
`;

const StopRow = styled.div`
    display: grid;
    grid-template-columns: 51px 44px 12px 38px 1fr;
    align-items: center;
    gap: 4px;
    margin-bottom: 9px;
    color: ${(props) => (props.$off ? "#b4b2a4" : "inherit")};
    & > label {
        text-align: right;
    }
    &:last-child {
        margin-bottom: 0;
    }
`;

const ColorPair = styled.span`
    display: grid;
    grid-template-columns: 28px 12px;
    gap: 2px;
    height: 15px;
    & > button {
        display: flex;
        align-items: center;
        justify-content: center;
        border: 1px solid #888;
        background: #f2f2f2;
    }
    & > button:first-child {
        background: #d3bf16;
    }
`;

const SizeGrip = styled.div`
    width: 12px;
    height: 12px;
    margin: 6px -8px 0 auto;
    background: #ece9d8;
`;

const PickerBody = styled.div`
    display: flex;
    padding: 7px 3px 8px 7px;
`;

const FieldColumn = styled.div`
    flex: 1;
    padding-top: 14px;
`;

const ColorField = styled.div`
    position: relative;
    height: 190px;
    border: 1px solid #aaa;
    background:
        linear-gradient(to top, #000, transparent),
        linear-gradient(to right, #fff, ${(props) => `hsl(${props.$hue}, 100%, 50%)`});
    & > svg {
        position: absolute;
        top: 15%;
        left: 87%;
    }
`;

const WebOnly = styled.label`
    display: flex;
    align-items: center;
    gap: 2px;
    margin-top: 5px;
    & > input {
        appearance: none;
        width: 10px;
        height: 10px;
        border: 1px solid #1c5180;
        background: #f6f6f4;
    }
`;

const HueSlider = styled.div`
    position: relative;
    width: 32px;
    height: 190px;
    margin-top: 14px;
    & > input {
        position: absolute;
        inset: 0;
        width: 100%;
        height: 100%;
        opacity: 0;
        writing-mode: vertical-lr;
        direction: rtl;
    }
`;

const HueBar = styled.div`
    height: 100%;
    margin: 0 8px;
    border: 1px solid #bbb;
    background: linear-gradient(#f00, #f0f 17%, #00f 33%, #0ff 50%, #0f0 67%, #ff0 83%, #f00);
`;

const HueMark = styled.div`
    position: absolute;
    left: 0;
    right: 0;
    display: flex;
    justify-content: space-between;
    padding: 0 1px;
    margin-top: -5px;
`;

const SideColumn = styled.div`
    flex: none;
    width: 134px;
    margin-left: 1px;
`;

const PickerTop = styled.div`
    display: flex;
    height: 97px;
`;

const Compare = styled.div`
    display: flex;
    flex-direction: column;
    width: 45px;
    margin-right: 7px;
    padding-top: 5px;
    text-align: center;
`;

const ComparePatch = styled.div`
    height: 51px;
    margin-bottom: 1px;
    border: 1px solid #444;
    background: linear-gradient(#d3bf16 50%, #080200 50%);
`;

const WebWarning = styled.div`
    display: flex;
    flex-direction: column;
    gap: 1px;
    width: 10px;
    margin: 46px 11px 0 0;
    & > button {
        height: 10px;
        border: 1px solid #222;
        background: #cc0;
    }
`;

const Values = styled.div`
    display: grid;
    grid-template-columns: 69px 1fr;
`;

const ValueColumn = styled.div`
    display: flex;
    flex-direction: column;
    gap: 6px;
`;

const ValueGroup = styled.div`
    display: flex;
    flex-direction: column;
    gap: 3px;
`;

const ValueRow = styled.div`
    display: grid;
    grid-template-columns: ${(props) => (props.$radio ? "11px 12px" : "23px")} ${(props) => (props.$wide ? 30 : 25)}px 1fr;
    align-items: center;
    column-gap: 1px;
    & > label {
        text-align: ${(props) => (props.$radio ? "left" : "right")};
    }
`;

const Radio = styled.input.attrs({ type: "radio" })`
    appearance: none;
    width: 10px;
    height: 10px;
    border: 1px solid #3c6888;
    border-radius: 50%;
    background: #f8f8f6;
    &:checked {
        background: radial-gradient(#21a121 0 2px, #f8f8f6 3px);
    }
`;

const HexRow = styled.div`
    display: grid;
    grid-template-columns: 9px 41px;
    align-items: center;
`;

export default App;
